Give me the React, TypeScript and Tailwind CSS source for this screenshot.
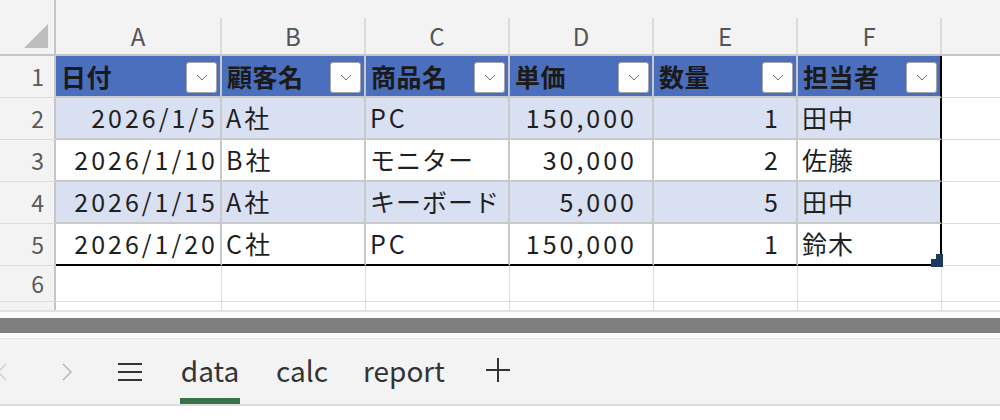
import React from "react";

const FONT = '"Hiragino Sans", "Noto Sans CJK JP", "Noto Sans", sans-serif';

const headers = ["日付", "顧客名", "商品名", "単価", "数量", "担当者"];
type Cell = { v: string; align: "l" | "a" | "n" };
const rows: Cell[][] = [
  [
    { v: "2026/1/5", align: "a" },
    { v: "A社", align: "l" },
    { v: "PC", align: "l" },
    { v: "150,000", align: "n" },
    { v: "1", align: "n" },
    { v: "田中", align: "l" },
  ],
  [
    { v: "2026/1/10", align: "a" },
    { v: "B社", align: "l" },
    { v: "モニター", align: "l" },
    { v: "30,000", align: "n" },
    { v: "2", align: "n" },
    { v: "佐藤", align: "l" },
  ],
  [
    { v: "2026/1/15", align: "a" },
    { v: "A社", align: "l" },
    { v: "キーボード", align: "l" },
    { v: "5,000", align: "n" },
    { v: "5", align: "n" },
    { v: "田中", align: "l" },
  ],
  [
    { v: "2026/1/20", align: "a" },
    { v: "C社", align: "l" },
    { v: "PC", align: "l" },
    { v: "150,000", align: "n" },
    { v: "1", align: "n" },
    { v: "鈴木", align: "l" },
  ],
];
const letters = ["A", "B", "C", "D", "E", "F"];
const widthCls = (i: number) => (i === 0 ? "w-[166px]" : "w-[144px]");

function Runs({ text }: { text: string }) {
  const parts = text.match(/[\x00-\x7f]+|[^\x00-\x7f]+/g) || [];
  return (
    <>
      {parts.map((p, i) =>
        /^[\x00-\x7f]+$/.test(p) ? (
          <span key={i} className="tracking-[3px]">
            {p}
          </span>
        ) : (
          <span key={i} className="tracking-[1px]">
            {p}
          </span>
        )
      )}
    </>
  );
}

function Chevron() {
  return (
    <svg width="12" height="7" viewBox="0 0 12 7" fill="none">
      <path d="M1 1 L6 6 L11 1" stroke="#6b6b6b" strokeWidth="1" />
    </svg>
  );
}

function RowHeader({ n, h }: { n: number | null; h: string }) {
  return (
    <div
      className={`${h} w-[56px] shrink-0 bg-[#f3f3f3] border-r-2 border-r-[#c6c6c6] border-b border-b-[#dcdcdc] flex items-center justify-end pr-[10px] text-[23px] text-[#5a5a5a]`}
    >
      {n}
    </div>
  );
}

export default function App() {
  return (
    <div
      className="w-[1000px] h-[420px] overflow-hidden bg-white flex flex-col"
      style={{ fontFamily: FONT }}
    >
      {/* grid */}
      <div className="h-[310px] shrink-0 overflow-hidden flex flex-col">
        {/* column header */}
        <div className="flex h-[56px] shrink-0">
          <div className="w-[56px] h-[56px] shrink-0 bg-[#f3f3f3] border-r-2 border-b-2 border-[#c6c6c6] flex items-start justify-start">
            <svg width="54" height="54" viewBox="0 0 54 54">
              <polygon points="48,24 48,48 24,48" fill="#bebebe" />
            </svg>
          </div>
          {letters.map((l, i) => (
            <div
              key={l}
              className={`${widthCls(i)} shrink-0 h-[56px] bg-[#f3f3f3] border-b-2 border-b-[#c6c6c6] flex flex-col`}
            >
              <div className="h-[18px]" />
              <div className="flex-1 border-r-2 border-r-[#dcdcdc] flex items-center justify-center text-[24px] text-[#555555]">
                {l}
              </div>
            </div>
          ))}
          <div className="flex-1 h-[56px] bg-[#f3f3f3] border-b-2 border-b-[#c6c6c6]" />
        </div>

        {/* row 1: table header */}
        <div className="flex h-[42px] shrink-0">
          <RowHeader n={1} h="h-[42px]" />
          {headers.map((t, i) => (
            <div
              key={t}
              className={`${widthCls(i)} shrink-0 h-[42px] bg-[#4b6fbd] border-b-2 border-b-[#c9c9c9] ${
                i === 5 ? "border-r-2 border-r-black" : "border-r-2 border-r-[#c4c9d6]"
              } flex justify-between pl-[5px] pr-[3px]`}
            >
              <span className="self-center font-bold text-[25px] tracking-[0.5px] text-[#1a1a1a] leading-none">
                {t}
              </span>
              <div className="mt-[6px] w-[31px] h-[31px] bg-white border border-[#a6a6a6] rounded-[3px] flex items-center justify-center">
                <Chevron />
              </div>
            </div>
          ))}
          <div className="flex-1 h-[42px] border-b border-b-[#dcdcdc]" />
        </div>

        {/* data rows */}
        {rows.map((r, ri) => {
          const band = ri % 2 === 0 ? "bg-[#d9e0f1]" : "bg-white";
          const last = ri === rows.length - 1;
          return (
            <div key={ri} className="flex h-[42px] shrink-0">
              <RowHeader n={ri + 2} h="h-[42px]" />
              {r.map((c, ci) => (
                <div
                  key={ci}
                  className={`${widthCls(ci)} shrink-0 h-[42px] ${band} relative ${
                    ci === 5 ? "border-r-2 border-r-black" : "border-r-2 border-r-[#c9c9c9]"
                  } ${last ? "border-b-2 border-b-black" : "border-b-2 border-b-[#c9c9c9]"} flex items-center ${
                    c.align === "a"
                      ? "justify-end pr-[2px]"
                      : c.align === "n"
                      ? "justify-end pr-[15px]"
                      : "justify-start pl-[4px]"
                  } text-[25px] text-[#1f1f1f] whitespace-nowrap`}
                >
                  <Runs text={c.v} />
                  {last && ci === 5 && (
                    <svg
                      className="absolute right-[-3px] bottom-[-3px]"
                      width="12"
                      height="13"
                      viewBox="0 0 12 13"
                    >
                      <polygon points="5,0 12,0 12,13 0,13 0,5 5,5" fill="#1e3a62" />
                    </svg>
                  )}
                </div>
              ))}
              <div className="flex-1 h-[42px] border-b border-b-[#dcdcdc]" />
            </div>
          );
        })}

        {/* empty rows */}
        {[6, 7].map((n) => (
          <div key={n} className="flex h-[36px] shrink-0">
            <RowHeader n={n === 6 ? 6 : null} h="h-[36px]" />
            {letters.map((l, i) => (
              <div
                key={l}
                className={`${widthCls(i)} shrink-0 h-[36px] border-r border-r-[#dcdcdc] border-b border-b-[#dcdcdc]`}
              />
            ))}
            <div className="flex-1 h-[36px] border-b border-b-[#dcdcdc]" />
          </div>
        ))}
      </div>

      {/* scrollbar area */}
      <div className="h-[28px] shrink-0 border-t-2 border-t-[#e2e2e2] bg-[#fbfbfb] flex flex-col">
        <div className="h-[6px]" />
        <div className="h-[15px] bg-[#7f7f7f]" />
      </div>

      {/* tabs */}
      <div className="h-[68px] shrink-0 bg-[#f3f3f3] border-t border-t-[#e3e3e3] border-b-2 border-b-[#dcdcdc] flex items-stretch text-[28px] text-[#333333]">
        <div className="ml-[-3px] w-[10px] flex items-center">
          <svg width="10" height="18" viewBox="0 0 10 18" fill="none">
            <path d="M9 1 L1 9 L9 17" stroke="#cfcfcf" strokeWidth="1.5" />
          </svg>
        </div>
        <div className="ml-[55px] w-[10px] flex items-center">
          <svg width="10" height="18" viewBox="0 0 10 18" fill="none">
            <path d="M1 1 L9 9 L1 17" stroke="#b5b5b5" strokeWidth="1.5" />
          </svg>
        </div>
        <div className="ml-[46px] w-[24px] flex flex-col justify-center gap-[6px]">
          <div className="h-[2px] bg-[#333333]" />
          <div className="h-[2px] bg-[#333333]" />
          <div className="h-[2px] bg-[#333333]" />
        </div>
        <div className="ml-[38px] w-[60px] flex flex-col">
          <div className="flex-1 flex items-center justify-center leading-none pt-[2px]">data</div>
          <div className="h-[6px] bg-[#3a7148]" />
        </div>
        <div className="ml-[36px] flex items-center leading-none pb-[4px]">calc</div>
        <div className="ml-[35px] flex items-center leading-none pb-[4px]">report</div>
        <div className="ml-[41px] flex items-center pb-[4px]">
          <svg width="24" height="24" viewBox="0 0 24 24" fill="none">
            <path d="M12 0 V24 M0 12 H24" stroke="#333333" strokeWidth="2" />
          </svg>
        </div>
      </div>
      <div className="flex-1 bg-white" />
    </div>
  );
}
